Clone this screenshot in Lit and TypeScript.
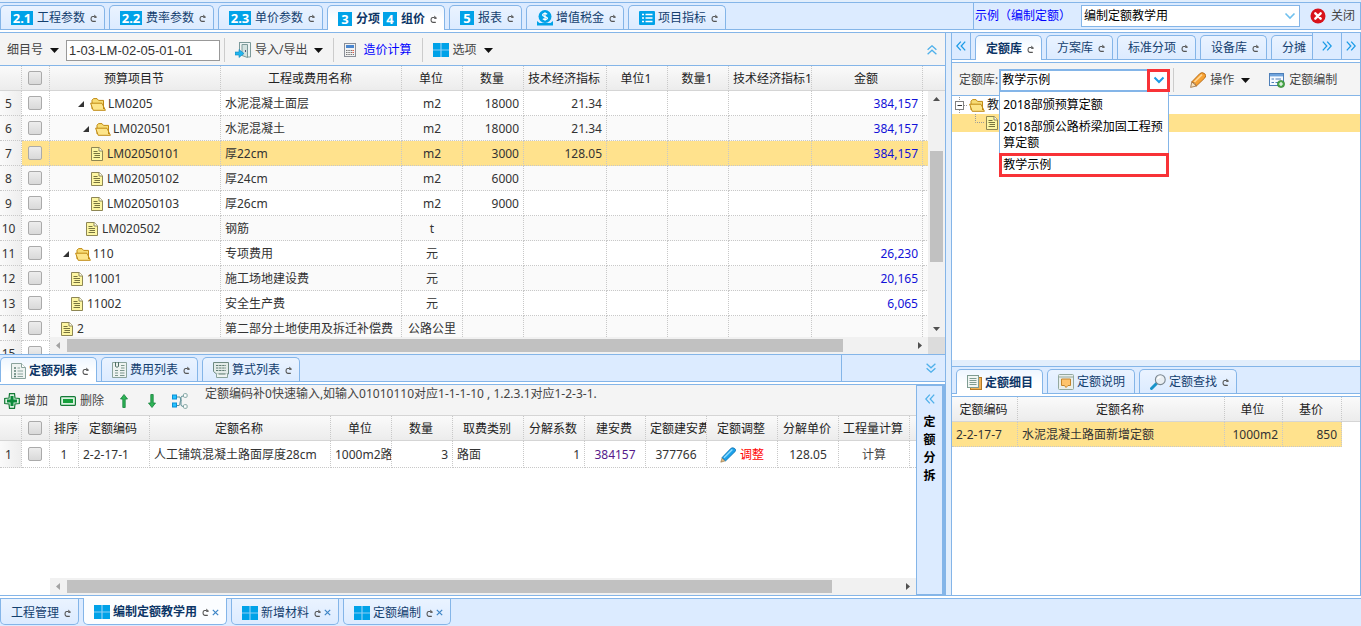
import { LitElement, html, css, svg, nothing, TemplateResult } from "lit";
import { customElement, state } from "lit/decorators.js";
import { classMap } from "lit/directives/class-map.js";

type Icon = TemplateResult;

const icon = (w: number, h: number, body: unknown, vb = `0 0 ${w} ${h}`): Icon =>
  html`<svg class="ico" width=${w} height=${h} viewBox=${vb} aria-hidden="true">${body}</svg>`;

const refreshIcon = () =>
  icon(7, 8, svg`<path d="M4.6 2.5H2.6Q1 2.7 1 4.9T2.8 7.4H5.8" fill="none" stroke="#555" stroke-width="1.1"/><path d="M4 .4L6.6 2.6V4H4.2V1.6Z" fill="#666"/>`);
const closeSmall = () => icon(7, 7, svg`<path d="M.8 .8L6.2 6.2M6.2 .8L.8 6.2" stroke="#3d85c6" stroke-width="1.2"/>`);
const caret = () => icon(9, 5, svg`<path d="M0 0H9L4.5 5Z" fill="#111"/>`);
const tiles = () =>
  icon(16, 14, svg`<rect width="16" height="14" fill="#8ccff5"/><path d="M0 0H7.4V6.4H0ZM8.6 0H16V6.4H8.6ZM0 7.6H7.4V14H0ZM8.6 7.6H16V14H8.6Z" fill="#00a2e8"/>`);
const door = () =>
  icon(16, 16, svg`<path d="M4 .5H15.5V15H12" fill="#eef4f4" stroke="#7c9a9a"/><path d="M4.5 1V9" stroke="#7c9a9a"/><path d="M7 2.5H12.5V15.5L7 13.5Z" fill="#d3e2e0" stroke="#7c9a9a"/><path d="M10.5 8V10" stroke="#557"/><path d="M0 10H4V7.5L9 11.5L4 15.5V13H0Z" fill="#22b5ee" stroke="#1286bd" stroke-width=".6"/>`);
const calc = () =>
  icon(12, 14, svg`<rect x=".5" y=".5" width="11" height="13" fill="#f2f2f2" stroke="#8a8f98"/><rect x="2" y="2" width="8" height="3" fill="#4a86cf"/><path d="M2 7.5H10M2 9.5H10M2 11.5H10" stroke="#777" stroke-dasharray="1.5 .8"/><path d="M8.5 7.5H10M8.5 9.5H10" stroke="#e6604a"/>`);
const coin = () =>
  icon(16, 16, svg`<circle cx="8" cy="6.5" r="6.5" fill="#00a2e8"/><path d="M10.2 4.2Q8 2.8 6.2 4.1T8 6.6T9.9 9T5.8 8.9M8 2.2V10.8" stroke="#fff" stroke-width="1.2" fill="none"/><path d="M0 11L2.5 13H13.5L16 11V15.5H0Z" fill="#00a2e8"/>`);
const listIcon = () =>
  icon(16, 14, svg`<rect width="16" height="14" rx="1" fill="#00a2e8"/><path d="M3 3.5H5M6.5 3.5H13.5M3 7H5M6.5 7H13.5M3 10.5H5M6.5 10.5H13.5" stroke="#fff" stroke-width="1.6"/>`);
const folder = () =>
  icon(16, 13, svg`<path d="M2 11V2.2L3.5 .6H7L8.5 2.4H13.5V5" fill="#f7dc74" stroke="#c08a14"/><path d="M.6 5.2H12L15.4 12.3H3.2Z" fill="#fde58a" stroke="#c08a14"/><path d="M13.5 3V11" stroke="#c08a14"/>`);
const doc = () =>
  icon(12, 14, svg`<path d="M.5 .5H8.2L11.5 3.8V13.5H.5Z" fill="#fdf6a2" stroke="#8d8654"/><path d="M8 .5V4H11.5" fill="#fff" stroke="#8d8654"/><path d="M2.5 4.5H6.5M2.5 6.5H9M3.5 8.5H9M2.5 10.5H9" stroke="#77743f"/>`);
const expander = () => icon(6, 6, svg`<path d="M6 0V6H0Z" fill="#333"/>`);
const listDoc = () =>
  icon(15, 16, svg`<path d="M.5 .5H10.5L14.5 4.5V15.5H.5Z" fill="#eef3f1" stroke="#8aa39c"/><path d="M10.5 .5V4.5H14.5" fill="#fff" stroke="#8aa39c"/><path d="M3 5H5M3 8H5M3 11H5M3 13.5H5" stroke="#5e8076" stroke-width="1.4"/><path d="M6.5 5H9M6.5 8H12M6.5 11H12M6.5 13.5H12" stroke="#8aa39c"/>`);
const clipDoc = () =>
  icon(15, 16, svg`<path d="M.5 .5H14.5V15.5H.5Z" fill="#eef3f1" stroke="#8aa39c"/><path d="M3.5 0V4.5Q5 6 6.5 4.5V0" fill="none" stroke="#4f6f66"/><path d="M9 3.5H12.5M9 6H12.5M3 8.5H6M8 8.5H12.5M3 11H6M8 11H12.5M3 13.5H6M8 13.5H12.5" stroke="#7b958d" stroke-width="1.2"/>`);
const formulaDoc = () =>
  icon(16, 16, svg`<path d="M.5 .5H15.5V12H3.5L.5 9.5Z" fill="#e3ebe8" stroke="#6f8a82"/><path d="M3 3.5H13M3 6H13M3 8.5H13" stroke="#5f7c73" stroke-dasharray="2.4 .7"/><path d="M3.5 11.5V15.5H14.5V11.5" fill="#eef3f1" stroke="#8aa39c"/><path d="M5.5 12H12.5" stroke="#5f7c73"/>`);
const plus = () =>
  icon(16, 16, svg`<path d="M5.5 .7H10.5L11 5L15.3 5.5V10.5L11 11L10.5 15.3H5.5L5 11L.7 10.5V5.5L5 5Z" fill="#d9f2df" stroke="#157a37" stroke-width="1.2"/><path d="M6.5 3H9.5V6.5H13V9.5H9.5V13H6.5V9.5H3V6.5H6.5Z" fill="#0b8a3a"/>`);
const minus = () =>
  icon(16, 10, svg`<rect x=".6" y=".6" width="14.8" height="8.8" rx="1" fill="#d9f2df" stroke="#157a37" stroke-width="1.2"/><rect x="3" y="3" width="10" height="4" fill="#16a03c"/>`);
const arrow = (down: boolean) =>
  icon(8, 14, svg`<path transform=${down ? "rotate(180 4 7)" : "rotate(0)"} d="M4 .5L7.5 5H5.2V13.5H2.8V5H.5Z" fill="#2fb457" stroke="#13823a" stroke-width=".8"/>`);
const flow = () =>
  icon(16, 16, svg`<path d="M4 4H8L9 8M4 12.5H7Q8 12.5 8 10T9 8M9 8V4Q9 3 12 3M9 8V12Q9 13.5 12 13.5" fill="none" stroke="#5d8f96"/><rect x=".5" y="2" width="4" height="4" fill="#25c3ff" stroke="#0b8fd6"/><rect x=".5" y="10" width="4" height="4" fill="#25c3ff" stroke="#0b8fd6"/><rect x="11.5" y=".7" width="3.6" height="3.6" rx="1" fill="#fff" stroke="#7fa3a0"/><rect x="11.5" y="11.7" width="3.6" height="3.6" rx="1" fill="#fff" stroke="#7fa3a0"/>`);
const bluePen = () =>
  icon(16, 16, svg`<path d="M.8 15.2L2.2 10.6L5.4 13.8Z" fill="#e4bd85" stroke="#8a6a3a" stroke-width=".6"/><path d="M2 10.6L11 1.2Q13 0 14.8 1.6T15.2 4.5L5.6 13.9Z" fill="#1ba1ea" stroke="#0b6aa8" stroke-width=".7"/><path d="M4 10.8L12.4 2.4" stroke="#8fdcff" stroke-width="1.4"/>`);
const orangePen = () =>
  icon(16, 16, svg`<path d="M.6 15.4L1.8 9.8L6.4 14Z" fill="#f7e2bd" stroke="#8a5a2a" stroke-width=".7"/><path d="M1.8 9.8L9.8 1.6Q12 -.4 14.6 1.6T14.6 6.2L6.4 14Q6 10.8 1.8 9.8Z" fill="#f7a233" stroke="#a85f12" stroke-width=".8"/><path d="M4.4 10L12 2.6" stroke="#ffd796" stroke-width="1.6"/>`);
const formAdd = () =>
  icon(16, 15, svg`<rect x=".5" y=".5" width="14" height="12" fill="#f6faff" stroke="#4e7fb8"/><rect x="1" y="1" width="13" height="2.4" fill="#6fa3dc"/><path d="M2.5 6H5M2.5 9.5H5M6.5 6H12M6.5 9.5H9" stroke="#4e7fb8"/><circle cx="12" cy="11" r="3.6" fill="#4aa84a" stroke="#2c7a2c" stroke-width=".6"/><path d="M10 11H14M12 9V13" stroke="#fff" stroke-width="1.2"/>`);
const stopIcon = () =>
  icon(16, 16, svg`<circle cx="8" cy="8" r="7.5" fill="#d8131b"/><path d="M5.3 5.3L10.7 10.7M10.7 5.3L5.3 10.7" stroke="#fff" stroke-width="2.4" stroke-linecap="round"/>`);
const stackDoc = () =>
  icon(15, 15, svg`<rect x="3.5" y="2.5" width="11" height="12" fill="#f0b257" stroke="#b57a25"/><rect x=".5" y=".5" width="11" height="12" fill="#f1f6f3" stroke="#7f9c92"/><path d="M2.5 3.5H9.5M2.5 5.5H9.5M2.5 7.5H9.5M2.5 9.5H9.5" stroke="#7f9c92"/>`);
const noteDoc = () =>
  icon(16, 16, svg`<rect x=".5" y=".5" width="15" height="15" rx="1" fill="#e9efec" stroke="#94a89f"/><path d="M1 3H15" stroke="#94a89f"/><path d="M3.5 5H12.5V11.5H10L8 13.5L6.5 11.5H3.5Z" fill="#ffc36b" stroke="#c4852c"/>`);
const lens = () =>
  icon(16, 16, svg`<path d="M1.5 14.5L6.5 9.5" stroke="#1893c9" stroke-width="3" stroke-linecap="round"/><circle cx="10.3" cy="5.7" r="4.9" fill="#e9eef2" stroke="#7b8790" stroke-width="1.1"/><path d="M7.6 5Q8.4 2.8 10.6 2.7" stroke="#fff" stroke-width="1.4" fill="none"/>`);
const chevrons = (angle: number, color = "#1b9be6") =>
  icon(10, 10, svg`<g transform=${`rotate(${angle} 5 5)`} fill="none" stroke=${color} stroke-width="1.3"><path d="M4.8 .6L.8 5L4.8 9.4M9.2 .6L5.2 5L9.2 9.4"/></g>`);
const badge = (t: string) => html`<span class=${classMap({ badge: true, long: t.length > 1 })}>${t}</span>`;

interface Tab {
  body: unknown;
  active?: boolean;
  refresh?: boolean;
  close?: boolean;
}

const tabs = (items: Tab[], bottom = false) => html`
  <div class="tabs ${bottom ? "hang" : ""}" role="tablist">
    ${items.map(
      (t) => html`<button class=${classMap({ tab: true, active: !!t.active, plain: t.refresh === false })} role="tab" aria-selected=${t.active ? "true" : "false"}>
        ${t.body}${t.refresh === false ? nothing : html`<span class="tail">${refreshIcon()}</span>`}${t.close ? closeSmall() : nothing}
      </button>`
    )}
  </div>`;

interface Item {
  no: number;
  pad: number;
  dir?: boolean;
  code: string;
  name: string;
  unit: string;
  qty?: string;
  rate?: string;
  sum?: string;
}

const ITEMS: Item[] = [
  { no: 5, pad: 28, dir: true, code: "LM0205", name: "水泥混凝土面层", unit: "m2", qty: "18000", rate: "21.34", sum: "384,157" },
  { no: 6, pad: 33, dir: true, code: "LM020501", name: "水泥混凝土", unit: "m2", qty: "18000", rate: "21.34", sum: "384,157" },
  { no: 7, pad: 41, code: "LM02050101", name: "厚22cm", unit: "m2", qty: "3000", rate: "128.05", sum: "384,157" },
  { no: 8, pad: 41, code: "LM02050102", name: "厚24cm", unit: "m2", qty: "6000" },
  { no: 9, pad: 41, code: "LM02050103", name: "厚26cm", unit: "m2", qty: "9000" },
  { no: 10, pad: 36, code: "LM020502", name: "钢筋", unit: "t" },
  { no: 11, pad: 13, dir: true, code: "110", name: "专项费用", unit: "元", sum: "26,230" },
  { no: 12, pad: 21, code: "11001", name: "施工场地建设费", unit: "元", sum: "20,165" },
  { no: 13, pad: 21, code: "11002", name: "安全生产费", unit: "元", sum: "6,065" },
  { no: 14, pad: 11, code: "2", name: "第二部分土地使用及拆迁补偿费", unit: "公路公里" },
  { no: 15, pad: 11, code: "", name: "", unit: "" },
];

const cols = (widths: number[]) => html`<colgroup>${widths.map((w) => html`<col style="width:${w}px" />`)}<col /></colgroup>`;
const check = (label: string) => html`<input type="checkbox" class="tick" aria-label=${label} />`;

@customElement("app-root")
export class AppRoot extends LitElement {
  @state() private selected = 7;

  static styles = css`
    :host {
      display: flex;
      flex-direction: column;
      height: 100vh;
      overflow: hidden;
      background: #e2eefc;
      color: #333;
      font: 12px/16px "Noto Sans", "Noto Sans CJK SC", sans-serif;
      --line: #84b5e8;
      --pane: #dcebff;
    }
    * { box-sizing: border-box; }
    button, input, select { font: inherit; color: inherit; margin: 0; }
    button { background: none; border: 0; padding: 0; display: flex; align-items: center; white-space: nowrap; }
    .ico { flex: none; display: block; }
    .strip { display: flex; align-items: flex-end; flex: none; height: 27px; background: var(--pane); border-top: 1px solid var(--line); }
    .top { margin-top: 2px; }
    .noline { border-top: 0; height: 26px; }
    .seam { flex: none; height: 4px; background: #fff; border: solid var(--line); border-width: 1px 0; }
    .tabs { display: flex; align-items: flex-end; gap: 4px; flex: 1; min-width: 0; overflow-x: clip; }
    .tab {
      flex: none; height: 24px; padding: 1px 7px 0 10px; gap: 3px; color: #14406f;
      border: 1px solid var(--line); border-bottom: 0; border-radius: 5px 5px 0 0;
      background: linear-gradient(#eaf3ff, #dcebff);
    }
    .tab.active { height: 25px; margin-bottom: -1px; position: relative; z-index: 1; font-weight: bold; color: #0c3566; background: linear-gradient(#eef6ff, #fff 60%); }
    .tab.plain { padding-right: 9px; }
    .hang { align-items: flex-start; }
    .hang .tab { height: 26px; padding-top: 2px; border: 1px solid var(--line); border-top: 0; border-radius: 0 0 5px 5px; }
    .hang .tab.active { height: 27px; margin: -1px 0 0; background: #fbfdff; }
    .tail { margin-left: 2px; }
    .badge { background: #00a2e8; color: #fff; font: bold 13px/14px "Noto Sans", sans-serif; height: 14px; width: 14px; margin-right: 1px; text-align: center; }
    .badge.long { width: 22px; }
    .project { flex: none; align-self: stretch; width: 388px; padding: 0 5px 0 1px; display: flex; align-items: center; gap: 10px; border: solid var(--line); border-width: 0 1px 0 1px; }
    .project .who { color: #00f; flex: none; }
    .pick { position: relative; flex: 1; display: flex; color: #000; }
    .pick select { appearance: none; width: 100%; height: 22px; padding: 0 2px; border: 1px solid var(--line); border-radius: 0; background: #fff; color: #000; outline: 0; }
    .pick .drop { position: absolute; right: 4px; top: 50%; transform: translateY(-50%); pointer-events: none; }
    .quit { gap: 5px; color: #444; }
    .main { flex: 1; min-height: 0; display: flex; gap: 5px; }
    .left { flex: 1; min-width: 0; display: flex; flex-direction: column; border-right: 1px solid var(--line); }
    .right { flex: none; width: 410px; display: flex; flex-direction: column; border: solid var(--line); border-width: 0 1px; }
    .bar { flex: none; display: flex; align-items: center; background: #f4f4f4; height: 33px; padding-top: 2px; border-bottom: 1px solid var(--line); color: #444; white-space: nowrap; }
    .bar button { gap: 4px; }
    .bar .cost { gap: 7px; margin-right: 6px; }
    .blue { color: #00f; }
    .field { display: flex; align-items: center; gap: 7px; padding-left: 7px; color: #444; }
    .code { width: 154px; height: 21px; border: 1px solid #999; background: #fff; padding: 0 2px; color: #333; font: 13px "Liberation Sans", sans-serif; }
    .sep { width: 1px; height: 24px; background: #ccc; margin: 0 10px 0 4px; }
    .sep.loose { margin-right: 16px; }
    .sep.clear { background: none; margin-right: 8px; }
    .wide .ico:last-child { margin: 0 6px 0 3px; }
    .bar .push { margin-left: auto; padding-right: 8px; }
    .grid { position: relative; flex: 1; min-height: 0; overflow: hidden; background: #fff; }
    table { width: 100%; border-collapse: separate; border-spacing: 0; table-layout: fixed; }
    th, td { height: 25px; padding: 2px 4px 0; border: 0 dotted #c8c8c8; border-width: 0 1px 1px 0; overflow: hidden; white-space: nowrap; text-align: left; font-weight: normal; }
    th:last-child, td:last-child { border-right: 0; }
    thead th { text-align: center; color: #222; background: linear-gradient(#fafafa, #ececec); border-bottom: 1px solid #d5d5d5; padding-right: 6px; }
    tbody tr:nth-child(even) td { background: #fafafa; }
    tbody th { text-align: center; padding: 2px 4px 0 0; background: linear-gradient(90deg, #fafafa, #eee); }
    .items tbody tr.on td, .rates tbody tr.on td { background: #ffe28d; }
    .num { text-align: right; }
    .mid { text-align: center; }
    .sum { text-align: right; color: #1212d8; }
    .tree { display: flex; align-items: center; gap: 4px; }
    .tree.dir { gap: 2px; }
    .tree.dir .ico:first-child { margin-right: 4px; }
    .tick { appearance: none; display: block; width: 14px; height: 14px; margin: 0 0 2px 2px; border: 1px solid #aaa; border-radius: 2px; background: linear-gradient(#ededed, #d9d9d9); }
    .vbar { position: absolute; right: 0; top: 25px; bottom: 17px; width: 17px; background: #f1f1f1; display: flex; flex-direction: column; align-items: center; justify-content: space-between; padding: 6px 0; }
    .vtrack { flex: 1; width: 13px; margin: 6px 0; }
    .vthumb { height: 52%; margin-top: 44px; background: #c1c1c1; }
    .hbar { position: absolute; left: 50px; right: 17px; bottom: 0; height: 17px; background: #f1f1f1; display: flex; align-items: center; padding: 0 6px; }
    .hbar.full { right: 0; }
    .htrack { flex: 1; margin: 0 7px; }
    .hthumb { width: 92%; height: 13px; background: #c1c1c1; }
    .corner { position: absolute; right: 0; bottom: 0; width: 17px; height: 17px; background: #dcdcdc; }
    .lower { flex: none; height: 241px; display: flex; flex-direction: column; }
    .tools { align-self: stretch; flex: none; width: 104px; border-left: 1px solid var(--line); display: flex; align-items: center; justify-content: flex-end; padding-right: 9px; }
    .work { flex: 1; min-height: 0; display: flex; }
    .quota { flex: 1; min-width: 0; display: flex; flex-direction: column; }
    .quota .bar { height: 31px; border-bottom: 1px solid #d5d5d5; padding: 1px 0 0 4px; gap: 12px; }
    .arrows { display: flex; gap: 20px; padding: 0 4px; align-items: center; }
    .arrows + button { margin-right: 5px; }
    .hint { align-self: flex-start; }
    .quota tbody td, .quota tbody th { height: 27px; }
    .quota a { color: #551a8b; text-decoration: none; }
    .quota td button { display: inline-flex; vertical-align: middle; }
    .adjust { gap: 4px; color: #f00; }
    .calc { color: #444; }
    .side { flex: none; width: 29px; background: var(--pane); border: solid var(--line); border-width: 1px 3px 1px 1px; display: flex; flex-direction: column; align-items: center; padding-top: 8px; color: #000; font-weight: bold; line-height: 18px; gap: 9px; }
    .side span { width: 12px; }
    .nav { flex: none; align-self: stretch; justify-content: center; width: 19px; border-right: 1px solid var(--line); margin-right: 4px; }
    .more { width: 30px; border-left: 1px solid var(--line); margin: 0; }
    .more.end { width: 18px; border: 0; }
    .lib { flex: none; width: 170px; margin-left: 1px; z-index: 3; }
    .lib select { height: 23px; border: 2px solid var(--line); padding: 0 1px; }
    .target { position: absolute; right: -1px; top: 0; width: 23px; height: 23px; border: 3px solid #f83237; pointer-events: none; display: flex; align-items: center; justify-content: center; }
    .menu { position: absolute; left: 0; right: 0; top: 23px; margin: 0; padding: 2px 0 0; list-style: none; background: #fff; border: 1px solid var(--line); border-top: 0; }
    .menu li { padding: 3px 2px 3px 3px; white-space: normal; }
    .menu .hot { outline: 3px solid #f83237; outline-offset: -2px; }
    .book { flex: 1; min-height: 0; background: #fff; }
    .node { height: 18px; display: flex; align-items: center; gap: 2px; padding-left: 3px; color: #222; }
    .node.child { background: #ffe28d; padding-left: 22px; }
    .detail { flex: none; margin-top: 6px; height: 229px; display: flex; flex-direction: column; }
    .inset { width: 4px; }
    .rates tbody tr td:last-child, .rates tbody tr.on td:last-child { background: #fff; border: 0; }
    .foot { flex: none; height: 27px; background: var(--pane); display: flex; }
  `;

  private renderTree(r: Item) {
    return html`<div class="tree ${r.dir ? "dir" : ""}" style="padding-left:${r.pad - 4}px">
      ${r.dir ? html`${expander()}${folder()}` : doc()}<span>${r.code}</span>
    </div>`;
  }

  private renderItems() {
    const heads = ["预算项目节", "工程或费用名称", "单位", "数量", "技术经济指标", "单位1", "数量1", "技术经济指标1", "金额", ""];
    return html`<div class="grid">
      <table class="items">
        ${cols([22, 28, 171, 181, 61, 61, 83, 61, 61, 83, 111])}
        <thead><tr><th></th><th>${check("全选")}</th>${heads.map((h) => html`<th>${h}</th>`)}</tr></thead>
        <tbody>
          ${ITEMS.map(
            (r) => html`<tr class=${classMap({ on: r.no === this.selected })} @click=${() => (this.selected = r.no)}>
              <th>${r.no}</th><td>${check(`第${r.no}行`)}</td>
              <td>${this.renderTree(r)}</td><td>${r.name}</td><td class="mid">${r.unit}</td>
              <td class="num">${r.qty}</td><td class="num">${r.rate}</td><td></td><td></td><td></td>
              <td class="sum">${r.sum}</td><td></td>
            </tr>`
          )}
        </tbody>
      </table>
      <div class="vbar">
        ${icon(7, 4, svg`<path d="M0 4L3.5 0L7 4Z" fill="#505050"/>`)}
        <div class="vtrack"><div class="vthumb"></div></div>
        ${icon(7, 4, svg`<path d="M0 0L3.5 4L7 0Z" fill="#505050"/>`)}
      </div>
      ${this.renderHBar(false)}
      <div class="corner"></div>
    </div>`;
  }

  private renderHBar(full: boolean) {
    return html`<div class="hbar ${full ? "full" : ""}">
      ${icon(4, 7, svg`<path d="M4 0L0 3.5L4 7Z" fill="#a3a3a3"/>`)}
      <div class="htrack"><div class="hthumb"></div></div>
      ${icon(4, 7, svg`<path d="M0 0L4 3.5L0 7Z" fill="#505050"/>`)}
    </div>`;
  }

  private renderQuota() {
    const heads = ["排序", "定额编码", "定额名称", "单位", "数量", "取费类别", "分解系数", "建安费", "定额建安费", "定额调整", "分解单价", "工程量计算", ""];
    return html`<div class="quota">
      <div class="bar">
        <button>${plus()}增加</button>
        <button>${minus()}删除</button>
        <div class="arrows"><button aria-label="上移">${arrow(false)}</button><button aria-label="下移">${arrow(true)}</button></div>
        <button aria-label="结构">${flow()}</button>
        <span class="hint">定额编码补0快速输入,如输入01010110对应1-1-1-10 , 1.2.3.1对应1-2-3-1.</span>
      </div>
      <div class="grid">
        <table>
          ${cols([22, 28, 29, 71, 181, 61, 61, 71, 61, 61, 61, 71, 61, 71])}
          <thead><tr><th></th><th>${check("全选定额")}</th>${heads.map((h) => html`<th>${h}</th>`)}</tr></thead>
          <tbody>
            <tr>
              <th>1</th><td>${check("定额1")}</td><td class="mid">1</td><td>2-2-17-1</td>
              <td>人工铺筑混凝土路面厚度28cm</td><td>1000m2路面</td><td class="num">3</td><td>路面</td>
              <td class="num">1</td><td class="mid"><a href="#cost">384157</a></td><td class="mid">377766</td>
              <td class="mid"><button class="adjust">${bluePen()}调整</button></td><td class="mid">128.05</td>
              <td class="mid"><button class="calc">计算</button></td><td></td>
            </tr>
          </tbody>
        </table>
        ${this.renderHBar(true)}
      </div>
    </div>`;
  }

  private renderLeft() {
    return html`<section class="left">
      <div class="bar">
        <div class="field"><label for="code">细目号</label>${caret()}<input id="code" class="code" value="1-03-LM-02-05-01-01" /></div>
        <span class="sep"></span>
        <button class="wide">${door()}<span>导入/导出</span>${caret()}</button>
        <span class="sep"></span>
        <button class="cost">${calc()}<span class="blue">造价计算</span></button>
        <span class="sep"></span>
        <button class="wide">${tiles()}<span>选项</span>${caret()}</button>
        <button class="push" aria-label="收起">${chevrons(90, "#4fb0ea")}</button>
      </div>
      ${this.renderItems()}
      <div class="lower">
        <div class="strip">
          ${tabs([
            { body: html`${listDoc()}定额列表`, active: true },
            { body: html`${clipDoc()}费用列表` },
            { body: html`${formulaDoc()}算式列表` },
          ])}
          <div class="tools"><button aria-label="折叠">${chevrons(-90, "#4fb0ea")}</button></div>
        </div>
        <div class="seam"></div>
        <div class="work">
          ${this.renderQuota()}
          <button class="side" aria-label="定额分拆">${chevrons(0, "#4fb0ea")}<span>定<br />额<br />分<br />拆</span></button>
        </div>
      </div>
    </section>`;
  }

  private renderRight() {
    return html`<section class="right">
      <div class="strip noline">
        <button class="nav" aria-label="向左">${chevrons(0)}</button>
        ${tabs([{ body: "定额库", active: true }, { body: "方案库" }, { body: "标准分项" }, { body: "设备库" }, { body: "分摊", refresh: false }])}
        <button class="nav more" aria-label="向右">${chevrons(180)}</button>
        <button class="nav more end" aria-label="收起右栏">${chevrons(180)}</button>
      </div>
      <div class="seam"></div>
      <div class="bar">
        <label class="field" for="lib">定额库:</label>
        <div class="pick lib">
          <select id="lib"><option>教学示例</option></select>
          <span class="target">${icon(12, 8, svg`<path d="M1.5 1.5L6 6L10.5 1.5" fill="none" stroke="#1b9be6" stroke-width="2"/>`)}</span>
          <ul class="menu" role="listbox" aria-label="定额库">
            <li role="option">2018部颁预算定额</li>
            <li role="option">2018部颁公路桥梁加固工程预算定额</li>
            <li role="option" class="hot" aria-selected="true">教学示例</li>
          </ul>
        </div>
        <span class="sep loose"></span>
        <button class="wide">${orangePen()}<span>操作</span>${caret()}</button>
        <span class="sep clear"></span>
        <button>${formAdd()}<span>定额编制</span></button>
      </div>
      <div class="book" role="tree">
        <div class="node" role="treeitem">
          ${icon(12, 16, svg`<rect x=".5" y="4.5" width="8" height="8" fill="#fff" stroke="#808080"/><path d="M2.5 8.5H7" stroke="#333"/><path d="M4.5 0V4M4.5 13V16M9 8.5H12" stroke="#999" stroke-dasharray="1 1"/>`)}
          ${folder()}<span>教</span>
        </div>
        <div class="node child" role="treeitem" aria-label="定额">
          ${icon(10, 18, svg`<path d="M1.5 0V8.5H10" fill="none" stroke="#999" stroke-dasharray="1 1"/>`)}
          ${doc()}
        </div>
      </div>
      <div class="detail">
        <div class="strip">
          <span class="inset"></span>
          ${tabs([
            { body: html`${stackDoc()}定额细目`, active: true, refresh: false },
            { body: html`${noteDoc()}定额说明`, refresh: false },
            { body: html`${lens()}定额查找` },
          ])}
        </div>
        <div class="seam"></div>
        <div class="grid">
          <table class="rates">
            ${cols([66, 207, 58, 59])}
            <thead><tr><th>定额编码</th><th>定额名称</th><th>单位</th><th>基价</th><th></th></tr></thead>
            <tbody><tr class="on"><td>2-2-17-7</td><td>水泥混凝土路面新增定额</td><td class="num">1000m2</td><td class="num">850</td><td></td></tr></tbody>
          </table>
        </div>
      </div>
    </section>`;
  }

  render() {
    return html`
      <header class="strip top">
        ${tabs([
          { body: html`${badge("2.1")}工程参数` },
          { body: html`${badge("2.2")}费率参数` },
          { body: html`${badge("2.3")}单价参数` },
          { body: html`${badge("3")}分项${badge("4")}组价`, active: true },
          { body: html`${badge("5")}报表` },
          { body: html`${coin()}增值税金` },
          { body: html`${listIcon()}项目指标` },
        ])}
        <div class="project">
          <label class="who" for="project">示例（编制定额）</label>
          <div class="pick">
            <select id="project"><option>编制定额教学用</option></select>
            <span class="drop">${icon(12, 8, svg`<path d="M1.5 1.5L6 6L10.5 1.5" fill="none" stroke="#6fc0ee" stroke-width="1.6"/>`)}</span>
          </div>
          <button class="quit">${stopIcon()}关闭</button>
        </div>
      </header>
      <div class="seam"></div>
      <main class="main">${this.renderLeft()}${this.renderRight()}</main>
      <div class="seam"></div>
      <footer class="foot">
        ${tabs(
          [
            { body: "工程管理" },
            { body: html`${tiles()}编制定额教学用`, active: true, close: true },
            { body: html`${tiles()}新增材料`, close: true },
            { body: html`${tiles()}定额编制`, close: true },
          ],
          true
        )}
      </footer>
    `;
  }
}
